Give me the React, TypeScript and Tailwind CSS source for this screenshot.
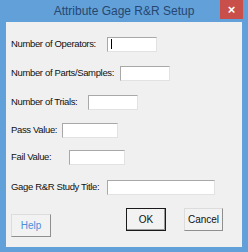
import React from "react";

const fields = [
	{ label: "Number of Operators:", labelW: "w-[96px]", boxW: "w-[50px]", mt: "mt-[14px]", caret: true },
	{ label: "Number of Parts/Samples:", labelW: "w-[109px]", boxW: "w-[50px]", mt: "mt-[13px]" },
	{ label: "Number of Trials:", labelW: "w-[77px]", boxW: "w-[50px]", mt: "mt-[13px]" },
	{ label: "Pass Value:", labelW: "w-[51px]", boxW: "w-[56px]", mt: "mt-[12px]" },
	{ label: "Fail Value:", labelW: "w-[58px]", boxW: "w-[56px]", mt: "mt-[11px]" },
	{ label: "Gage R&R Study Title:", labelW: "w-[96px]", boxW: "w-[108px]", mt: "mt-[14px]" },
];

export default function App() {
	return (
		<div className="w-[248px] h-[252px] bg-[#62a0d9] flex flex-col font-['Liberation_Sans',sans-serif]">
			{/* title bar */}
			<div className="h-[22px] flex items-start shrink-0">
				<div className="w-[28px]" />
				<div className="flex-1 text-center text-[12px] leading-[22px] text-[#254770]">
					Attribute Gage R&amp;R Setup
				</div>
				<div className="w-[23px] h-[19px] bg-[#c9504a] flex items-center justify-center text-white text-[13px] font-bold leading-none">
					×
				</div>
				<div className="w-[5px]" />
			</div>

			{/* client */}
			<div className="mx-[6px] w-[236px] h-[225px] bg-[#f0f0f0] flex flex-col pl-[5px] text-[9.5px] text-[#111]">
				{fields.map((f) => (
					<div key={f.label} className={`flex items-center h-[16px] ${f.mt}`}>
						<span className={`${f.labelW} shrink-0 whitespace-nowrap tracking-[-0.35px]`}>{f.label}</span>
						<div
							className={`${f.boxW} h-[15px] bg-white border border-t-[#a8a8a8] border-l-[#a8a8a8] border-r-[#e2e2e2] border-b-[#e2e2e2] flex items-center`}>
							{f.caret && <div className="ml-[3px] w-px h-[10px] bg-black" />}
						</div>
					</div>
				))}

				<div className="flex items-start mt-[13px]">
					<button className="mt-[6px] w-[40px] h-[23px] bg-[#f2f2f2] border border-[#dcdcdc] border-r-[#8f8f8f] border-b-[#8f8f8f] text-[#4c8fd8] text-[10px]">
						Help
					</button>
					<button className="ml-[75px] w-[40px] h-[23px] bg-[#f2f2f2] border border-[#1a1a1a] text-[10px] shadow-[inset_-1px_-1px_0_#9a9a9a]">
						OK
					</button>
					<button className="ml-[18px] w-[39px] h-[23px] bg-[#f2f2f2] border border-[#dcdcdc] border-r-[#8f8f8f] border-b-[#8f8f8f] text-[10px]">
						Cancel
					</button>
				</div>
			</div>
		</div>
	);
}
